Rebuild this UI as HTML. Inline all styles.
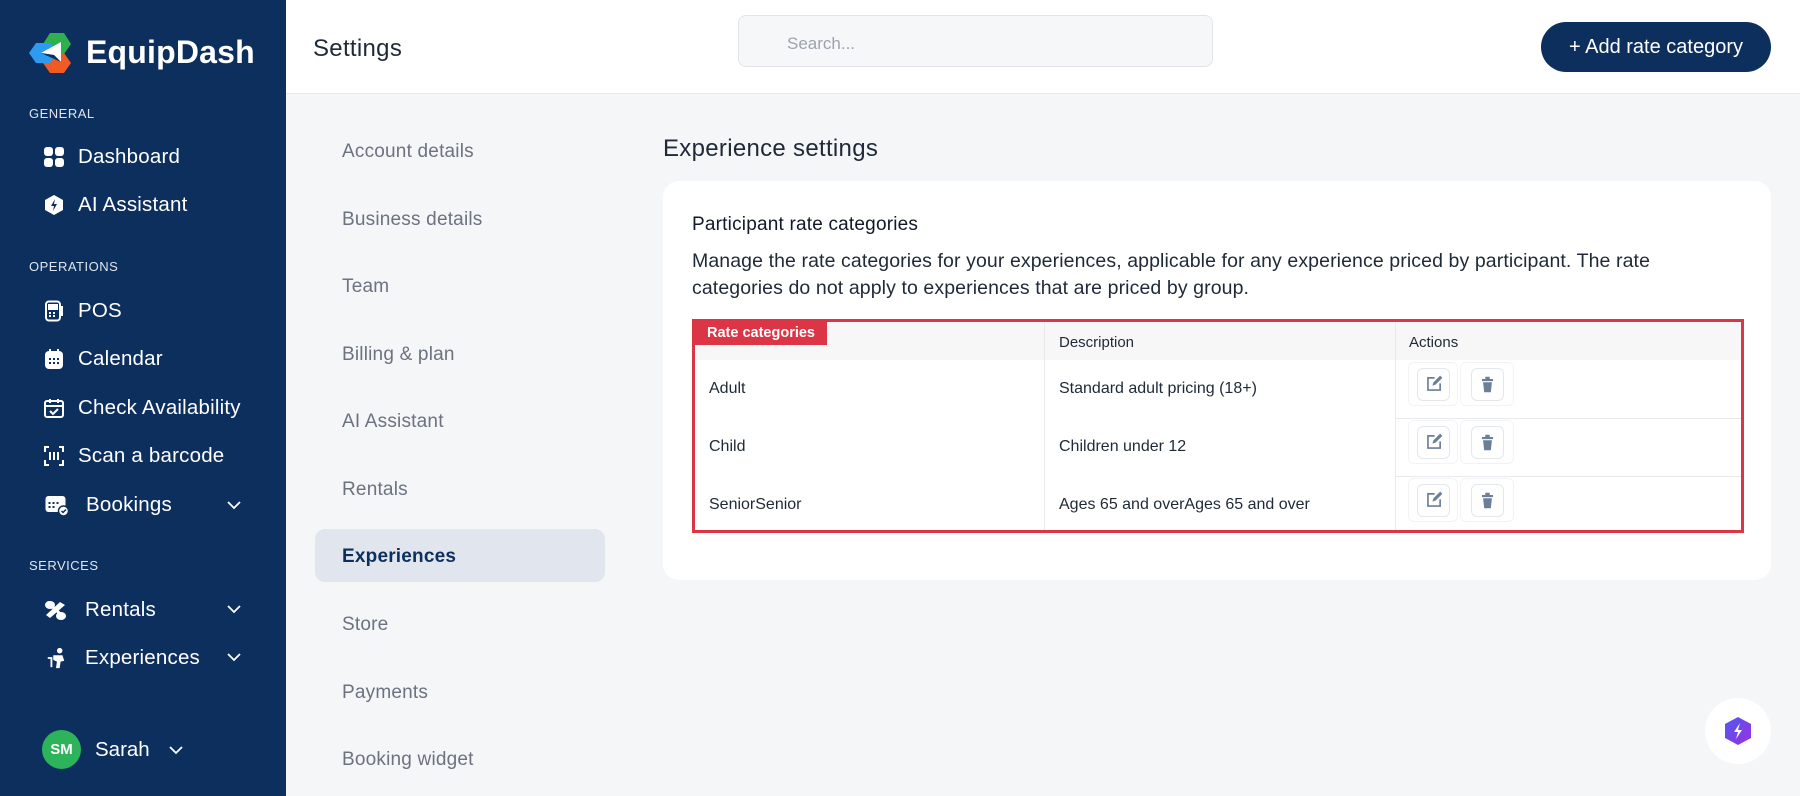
<!DOCTYPE html>
<html><head><meta charset="utf-8"><style>
*{box-sizing:border-box;margin:0;padding:0}
body{width:1800px;height:796px;overflow:hidden;background:#f5f6f8;font-family:"Liberation Sans",sans-serif;position:relative;color:#1f2937}
.sb{position:absolute;left:0;top:0;width:286px;height:796px;background:#0c2f5e;color:#fff}
.abs{position:absolute}
.sec{position:absolute;left:29px;font-size:13px;color:#dfe5ee;letter-spacing:.5px}
.it{position:absolute;left:43px;font-size:20.5px;font-weight:500;color:#fff;display:flex;align-items:center;height:30px;letter-spacing:.2px}
.it svg{width:22px;height:22px;margin-right:13px}
.chev{position:absolute;left:226px;width:16px;height:10px}
.hdr{position:absolute;left:286px;top:0;right:0;height:94px;background:#fff;border-bottom:1px solid #e6e8ec}
.nav{position:absolute;left:342px;font-size:19px;color:#6b7280;letter-spacing:.2px}
</style></head><body>
<div class="sb">
 <svg class="abs" style="left:28px;top:32px" width="44" height="42" viewBox="0 0 44 42">
  <polygon points="22,1 36,1 43,12 36,22 22,22 15,12" fill="#2fb050"/>
  <polygon points="22,21 36,21 43,31 36,41 22,41 15,31" fill="#f05a24"/>
  <polygon points="8,11 22,11 29,21 22,31 8,31 1,21" fill="#2d9cf0"/>
  <polygon points="13,21 33,10 33,30 26,23" fill="#fff"/>
  <polygon points="13,21 26,23 33,30" fill="#0c2f5e"/>
 </svg>
 <div class="abs" style="left:86px;top:34px;font-size:32px;font-weight:700;letter-spacing:.2px">EquipDash</div>
 <div class="sec" style="top:106px">GENERAL</div>
 <div class="it" style="top:142px"><svg viewBox="0 0 22 22" fill="#fff"><rect x="1" y="1" width="9" height="9" rx="3"/><rect x="12" y="1" width="9" height="9" rx="3"/><rect x="1" y="12" width="9" height="9" rx="3"/><rect x="12" y="12" width="9" height="9" rx="3"/></svg>Dashboard</div>
 <div class="it" style="top:190px"><svg viewBox="0 0 22 22"><polygon points="11,1 20,6 20,16 11,21 2,16 2,6" fill="#fff"/><path d="M12 5l-4 7h3l-1 5 4-7h-3z" fill="#0c2f5e"/></svg>AI Assistant</div>
 <div class="sec" style="top:259px">OPERATIONS</div>
 <div class="it" style="top:296px"><svg viewBox="0 0 22 22" fill="none" stroke="#fff" stroke-width="2"><rect x="3" y="1.5" width="14" height="19" rx="3"/><path d="M17 7h2v8h-2"/><rect x="6" y="5" width="8" height="4" fill="#fff"/><path d="M6 13h2M10 13h2M6 16h2M10 16h2"/></svg>POS</div>
 <div class="it" style="top:344px"><svg viewBox="0 0 22 22"><rect x="2" y="3" width="18" height="18" rx="4" fill="#fff"/><path d="M7 1v4M15 1v4" stroke="#fff" stroke-width="2"/><g fill="#0c2f5e"><rect x="6" y="10" width="2" height="2"/><rect x="10" y="10" width="2" height="2"/><rect x="14" y="10" width="2" height="2"/><rect x="6" y="14" width="2" height="2"/><rect x="10" y="14" width="2" height="2"/><rect x="14" y="14" width="2" height="2"/></g></svg>Calendar</div>
 <div class="it" style="top:393px"><svg viewBox="0 0 22 22" fill="none" stroke="#fff" stroke-width="2"><rect x="2" y="4" width="18" height="16" rx="2"/><path d="M2 9h18M7 2v4M15 2v4M7 14l3 3 5-5"/></svg>Check Availability</div>
 <div class="it" style="top:441px"><svg viewBox="0 0 22 22" fill="none" stroke="#fff" stroke-width="2"><path d="M2 7V2h4M16 2h4v5M20 15v5h-4M6 20H2v-5M7 7v8M11 7v8M15 7v8"/></svg>Scan a barcode</div>
 <div class="it" style="top:490px;left:43px"><svg viewBox="0 0 24 22" style="width:27px;margin-right:16px"><rect x="1" y="2" width="20" height="16" rx="3" fill="#fff"/><g fill="#0c2f5e"><rect x="4" y="8" width="2" height="2"/><rect x="8" y="8" width="2" height="2"/><rect x="12" y="8" width="2" height="2"/><rect x="4" y="12" width="2" height="2"/><rect x="8" y="12" width="2" height="2"/></g><circle cx="19" cy="17" r="5" fill="#fff" stroke="#0c2f5e" stroke-width="1.5"/><path d="M17 17l1.5 1.5 3-3" stroke="#0c2f5e" stroke-width="1.5" fill="none"/></svg>Bookings</div>
 <svg class="chev" style="top:500px" viewBox="0 0 16 10"><path d="M2 2l6 6 6-6" stroke="#fff" stroke-width="1.8" fill="none"/></svg>
 <div class="sec" style="top:558px">SERVICES</div>
 <div class="it" style="top:595px"><svg viewBox="0 0 24 22" style="width:26px;margin-right:16px" fill="#fff"><path d="M3 3l18 16" stroke="#fff" stroke-width="3"/><ellipse cx="6" cy="6" rx="5" ry="4"/><path d="M16 3l5 3-15 13-4-3z"/><ellipse cx="17" cy="17" rx="5" ry="4"/></svg>Rentals</div>
 <svg class="chev" style="top:604px" viewBox="0 0 16 10"><path d="M2 2l6 6 6-6" stroke="#fff" stroke-width="1.8" fill="none"/></svg>
 <div class="it" style="top:643px"><svg viewBox="0 0 24 24" style="width:26px;margin-right:16px" fill="#fff"><circle cx="16" cy="4" r="3"/><path d="M9 9h10l2 6-4 1-1 7h-4l1-7-4-2z"/><path d="M3 11h5v11H6v-9H3z"/></svg>Experiences</div>
 <svg class="chev" style="top:652px" viewBox="0 0 16 10"><path d="M2 2l6 6 6-6" stroke="#fff" stroke-width="1.8" fill="none"/></svg>
 <div class="abs" style="left:42px;top:730px;width:39px;height:39px;border-radius:50%;background:#2db35a;font-size:15px;font-weight:700;display:flex;align-items:center;justify-content:center">SM</div>
 <div class="abs" style="left:95px;top:738px;font-size:20.5px;font-weight:500">Sarah</div>
 <svg class="abs" style="left:168px;top:745px" width="16" height="10" viewBox="0 0 16 10"><path d="M2 2l6 6 6-6" stroke="#fff" stroke-width="1.8" fill="none"/></svg>
</div>
<div class="hdr">
 <div class="abs" style="left:27px;top:35px;font-size:24px;font-weight:500;color:#1f2937;letter-spacing:.3px">Settings</div>
 <div class="abs" style="left:452px;top:15px;width:475px;height:52px;border:1px solid #e2e4e8;border-radius:8px;background:#f6f7f9;font-size:17px;color:#9ca3af;padding:18px 0 0 48px">Search...</div>
 <div class="abs" style="left:1255px;top:22px;width:230px;height:50px;border-radius:25px;background:#0c2f5e;color:#fff;font-size:20px;font-weight:500;display:flex;align-items:center;justify-content:center">+ Add rate category</div>
</div>
<div class="abs" style="left:315px;top:529px;width:290px;height:53px;border-radius:10px;background:#e1e6ee"></div>
<div class="nav" style="top:141px">Account details</div>
<div class="nav" style="top:209px">Business details</div>
<div class="nav" style="top:276px">Team</div>
<div class="nav" style="top:344px">Billing &amp; plan</div>
<div class="nav" style="top:411px">AI Assistant</div>
<div class="nav" style="top:479px">Rentals</div>
<div class="nav" style="top:546px;color:#0c2f5e;font-weight:700">Experiences</div>
<div class="nav" style="top:614px">Store</div>
<div class="nav" style="top:682px">Payments</div>
<div class="nav" style="top:749px">Booking widget</div>
<div class="abs" style="left:663px;top:135px;font-size:24px;font-weight:500;color:#1f2937;letter-spacing:.3px">Experience settings</div>
<div class="abs" style="left:663px;top:181px;width:1108px;height:399px;background:#fff;border-radius:16px">
 <div class="abs" style="left:29px;top:33px;font-size:19px;font-weight:500;color:#111827;letter-spacing:.2px">Participant rate categories</div>
 <div class="abs" style="left:29px;top:67px;width:1035px;font-size:19.5px;line-height:27px;color:#1f2937;letter-spacing:.1px">Manage the rate categories for your experiences, applicable for any experience priced by participant. The rate categories do not apply to experiences that are priced by group.</div>
 <div class="abs" style="left:29px;top:138px;width:1052px;height:214px;border:3px solid #dc3545">
  <div class="abs" style="left:0;top:0;width:1046px;height:38px;background:#f7f7f8"></div>
  <div class="abs" style="left:349px;top:0;width:1px;height:208px;background:#e8e9ec"></div>
  <div class="abs" style="left:700px;top:0;width:1px;height:208px;background:#e8e9ec"></div>
  <div class="abs" style="left:701px;top:96px;width:345px;height:1px;background:#e8e9ec"></div>
  <div class="abs" style="left:701px;top:154px;width:345px;height:1px;background:#e8e9ec"></div>
  <div class="abs" style="left:0;top:0;width:132px;height:23px;background:#dc3545;color:#fff;font-size:14.5px;font-weight:700;padding:3px 0 0 12px">Rate categories</div>
  <div class="abs" style="left:364px;top:12px;font-size:15px">Description</div>
  <div class="abs" style="left:714px;top:12px;font-size:15px">Actions</div>
  <div class="abs" style="left:14px;top:58px;font-size:16px">Adult</div>
  <div class="abs" style="left:364px;top:58px;font-size:16px">Standard adult pricing (18+)</div>
  <div class="abs" style="left:14px;top:116px;font-size:16px">Child</div>
  <div class="abs" style="left:364px;top:116px;font-size:16px">Children under 12</div>
  <div class="abs" style="left:14px;top:174px;font-size:16px">SeniorSenior</div>
  <div class="abs" style="left:364px;top:174px;font-size:16px">Ages 65 and overAges 65 and over</div>
  <div id="acts"></div>
 </div>
</div>
<div class="abs" style="left:1705px;top:698px;width:66px;height:66px;border-radius:50%;background:#fff"></div>
<svg class="abs" style="left:1724px;top:716px" width="28" height="30" viewBox="0 0 28 30"><defs><linearGradient id="g" x1="0" y1="0" x2="1" y2="1"><stop offset="0" stop-color="#4f5bf0"/><stop offset="1" stop-color="#9b2fe0"/></linearGradient></defs><polygon points="14,1 27,8 27,22 14,29 1,22 1,8" fill="url(#g)"/><path d="M16 7l-6 9h4l-2 7 6-9h-4z" fill="#fff"/></svg>
<script>
var h='';[0,1,2].forEach(function(i){var t=40+i*58;
h+='<div class="abs" style="left:713px;top:'+t+'px;width:50px;height:44px;border:1px solid #f2f3f5;border-radius:6px"><div class="abs" style="left:8px;top:5px;width:33px;height:33px;border:1px solid #e5e7eb;border-radius:6px;background:#fff"><svg width="31" height="31" viewBox="0 0 28 28" class="abs"><path d="M15 8H9v11h11v-6" stroke="#6b7f99" stroke-width="1.5" fill="none"/><path d="M13 15l1-3 6-6 2 2-6 6z" fill="#6b7f99"/></svg></div></div>';
h+='<div class="abs" style="left:765px;top:'+t+'px;width:54px;height:44px;border:1px solid #f2f3f5;border-radius:6px"><div class="abs" style="left:10px;top:5px;width:33px;height:33px;border:1px solid #e5e7eb;border-radius:6px;background:#fff"><svg width="31" height="31" viewBox="0 0 28 28" class="abs"><path d="M12 8h4M9 10h10" stroke="#6b7f99" stroke-width="2"/><path d="M10 12h8l-1 9h-6z" fill="#6b7f99"/></svg></div></div>';});
document.getElementById('acts').innerHTML=h;
</script>
</body></html>
